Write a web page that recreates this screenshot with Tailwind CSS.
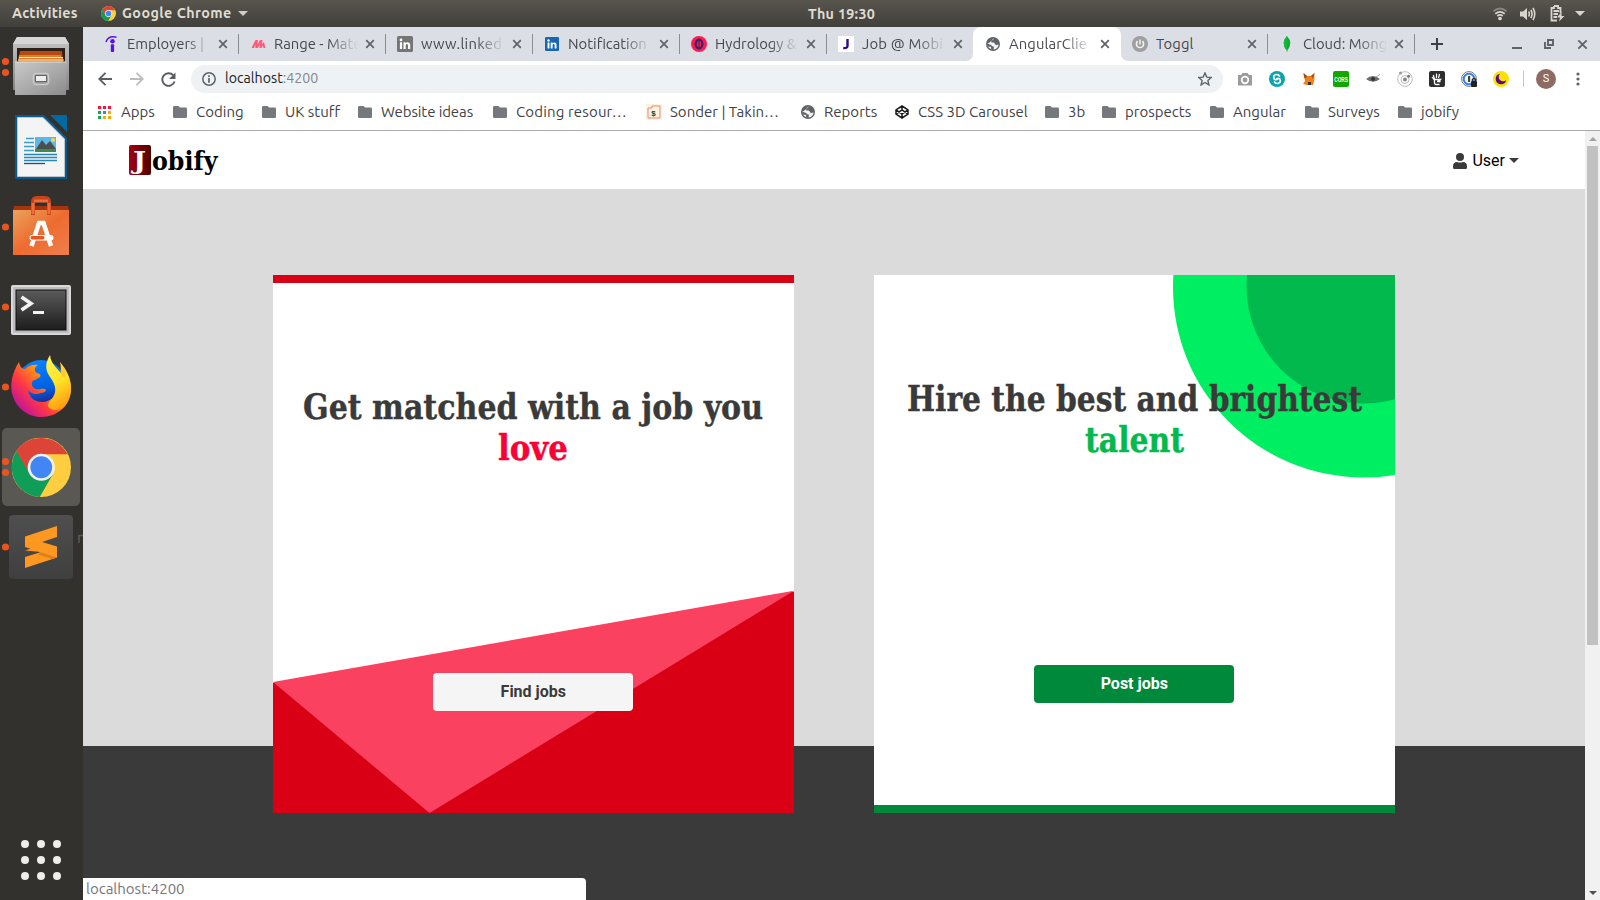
<!DOCTYPE html>
<html lang="en">
<head>
<meta charset="utf-8">
<title>Jobify</title>
<script src="https://cdn.jsdelivr.net/npm/@tailwindcss/browser@4"></script>
</head>
<body class="w-[1600px] h-[900px] overflow-hidden bg-[#33312d] font-['Ubuntu','Open_Sans',sans-serif]">
<svg class="absolute size-0">
  <defs>
    <linearGradient id="metal" x1="0" y1="0" x2="0" y2="1"><stop offset="0" stop-color="#c6c6c6"/><stop offset="1" stop-color="#858585"/></linearGradient>
    <linearGradient id="front" x1="0" y1="0" x2="1" y2="1"><stop offset="0" stop-color="#c9c9c9"/><stop offset=".6" stop-color="#a5a5a5"/><stop offset="1" stop-color="#8a8a8a"/></linearGradient>
    <linearGradient id="bag" x1="0" y1="0" x2="1" y2="1"><stop offset="0" stop-color="#e9a35c"/><stop offset=".5" stop-color="#ee6b30"/><stop offset="1" stop-color="#ef7f4c"/></linearGradient>
    <linearGradient id="term" x1="0" y1="0" x2="0" y2="1"><stop offset="0" stop-color="#5b5b5b"/><stop offset="1" stop-color="#1d1d1d"/></linearGradient>
    <linearGradient id="ffbody" x1=".9" y1=".1" x2=".1" y2=".8"><stop offset="0" stop-color="#ffd93b"/><stop offset=".35" stop-color="#ff980e"/><stop offset=".7" stop-color="#ff3647"/><stop offset="1" stop-color="#c3149b"/></linearGradient>
    <linearGradient id="fftail" x1=".3" y1="0" x2=".6" y2="1"><stop offset="0" stop-color="#fff44f"/><stop offset=".5" stop-color="#ffe226"/><stop offset="1" stop-color="#ff980e"/></linearGradient>
    <linearGradient id="ffglobe" x1=".3" y1="0" x2=".5" y2="1"><stop offset="0" stop-color="#0a84ff"/><stop offset=".6" stop-color="#0060df"/><stop offset="1" stop-color="#2b1173"/></linearGradient>
    <linearGradient id="subl" x1="0" y1="0" x2="0" y2="1"><stop offset="0" stop-color="#4f4f4f"/><stop offset="1" stop-color="#3f3f3f"/></linearGradient>
    <symbol id="chrome" viewBox="0 0 60 60">
      <circle cx="30" cy="30" r="30" fill="#ffcd40"/>
      <path d="M5.500 13A30 30 0 0 0 28.500 60L42 36.500L30 43L18.700 36.500Z" fill="#0f9d58"/>
      <path d="M30 17H57L56 16A30 30 0 0 0 4.800 13.700L18.700 37Z" fill="#db4437"/>
      <circle cx="30" cy="30" r="13.700" fill="#f1f1f1"/><circle cx="30" cy="30" r="11" fill="#4285f4"/>
    </symbol>
    <symbol id="x" viewBox="0 0 10 10"><path d="M1.200 1.200L8.800 8.800M8.800 1.200L1.200 8.800" stroke="#5f6368" stroke-width="1.700"/></symbol>
    <symbol id="folder" viewBox="0 0 14 12"><path d="M1.300 0H5.500L7 1.600H12.700A1.300 1.300 0 0 1 14 2.900V10.700A1.300 1.300 0 0 1 12.700 12H1.300A1.300 1.300 0 0 1 0 10.700V1.300A1.300 1.300 0 0 1 1.300 0Z" fill="#75797d"/></symbol>
    <symbol id="globe" viewBox="0 0 14 14"><circle cx="7" cy="7" r="7" fill="#5f6368"/><path d="M8.300 1.500C6 2 5.800 2.800 6.500 3.600C5 4 4.800 5 5.500 5.600C7 5.200 8.600 5.300 8.800 6.800C9 8.300 10.500 7.900 12.600 7.600C12.400 10.200 10.500 12.400 7.600 12.600C7 11.700 8.600 11 7.700 9.600C6.500 9.400 6 9 5.400 8.200C4.300 7.900 3 7 1.500 6.800C1.300 8 1.600 8.800 2 9.700L5 9.800L5.100 11.800L6 12.500L4 11.500C2.500 10.500 1.500 9 1.500 7" fill="#fff" opacity=".93"/></symbol>
    <symbol id="in" viewBox="0 0 16 16"><rect width="16" height="16" rx="1.500" fill="currentColor"/><circle cx="4" cy="3.900" r="1.400" fill="#fff"/><path d="M2.900 6.300H5.100V13H2.900ZM6.500 6.300H8.600V7.200C9.900 5.500 13.200 5.700 13.200 9V13H11V9.500C11 7.500 8.700 7.500 8.700 9.500V13H6.500Z" fill="#fff"/></symbol>
  </defs>
</svg>

<!-- GNOME top bar -->
<header class="relative flex h-[27px] items-center bg-linear-to-b from-[#58554d] to-[#403f3a] text-[14.3px] font-bold text-[#dfdbd2]">
  <div class="w-[89px] pl-3 leading-[27px] tracking-[.2px]">Activities</div>
  <svg class="ml-3 size-[15px]"><use href="#chrome"/></svg>
  <div class="ml-1.5 w-[112px] whitespace-nowrap leading-[27px] tracking-[.45px]">Google Chrome</div>
  <svg class="ml-1 h-[5px] w-[10px]"><path d="M0 0H10L5 5Z" fill="#d0cdc5"/></svg>
  <div class="absolute left-[808px] leading-[26px] tracking-[.3px]">Thu 19:30</div>
  <div class="ml-auto flex items-center pr-[15px]">
    <svg class="h-[14px] w-[14px]" viewBox="0 0 14 14" fill="none" stroke="#d8d5cd" stroke-width="1.700"><path d="M.5 4.300Q7-1.300 13.500 4.300" stroke="#85837c"/><path d="M2.300 6.800Q7 2.800 11.700 6.800M4.300 9Q7 6.800 9.700 9"/><circle cx="7" cy="11.500" r="1.200" fill="#d8d5cd" stroke-width="1.300"/></svg>
    <svg class="ml-[13px] h-[14px] w-[16px]" viewBox="0 0 16 14"><path d="M0 4.500H3L7 1V13L3 9.500H0Z" fill="#d8d5cd"/><path d="M8.500 4.500Q10.300 7 8.500 9.500M10.800 2.800Q13.300 7 10.800 11.200M13 1Q16.500 7 13 13" fill="none" stroke="#d8d5cd" stroke-width="1.600"/></svg>
    <svg class="ml-[14px] h-[17px] w-[15px]" viewBox="0 0 15 17"><path d="M4 1H8V3H10.500V8M7 15.500H1.500V3H4V1M3.500 6H9M3.500 9H8M3.500 12H7" fill="none" stroke="#d8d5cd" stroke-width="1.800"/><path d="M11.500 7L7 12.500H10L9 16.500L14.500 11H11.500Z" fill="#d8d5cd"/></svg>
    <svg class="ml-[10px] h-[5px] w-[10px]"><path d="M0 0H10L5 5Z" fill="#d8d5cd"/></svg>
  </div>
</header>

<div class="flex h-[873px]">
  <!-- Dock -->
  <aside class="flex w-[83px] shrink-0 flex-col bg-[#33312d]">
    <svg class="h-20 w-[83px]" viewBox="0 0 83 80">
      <circle cx="5.500" cy="34.500" r="3.600" fill="#e95420"/><circle cx="5.500" cy="45.500" r="3.600" fill="#e95420"/>
      <path d="M17 10H65L69 17V63H13V17Z" fill="url(#metal)"/><path d="M17 10H65L69 17H13Z" fill="#d6d6d6"/>
      <rect x="17" y="21" width="48" height="16" fill="#2c2018"/><path d="M20 24H62L63 36H18Z" fill="#b8480d"/><path d="M19 28H61V31H63V36H18Z" fill="#d9822b"/><path d="M19 30.500H63M18 33H64" stroke="#fbe3b5" stroke-width="1.200"/>
      <path d="M15 35H67L66 68H15Z" fill="url(#front)"/><path d="M15 35H66" stroke="#ddd"/>
      <rect x="33.500" y="46.500" width="15" height="11" rx="3" fill="#999" stroke="#ccc" stroke-width="1.500"/><rect x="35.500" y="48.500" width="11" height="6" fill="#eee" stroke="#666"/>
    </svg>
    <svg class="h-20 w-[83px]" viewBox="0 0 83 80">
      <path d="M15 8H44L67 31V72H15Z" fill="#075b93"/><path d="M17.500 10.500H43L64.500 32V69.500H17.500Z" fill="#f4f4f4" stroke="#c5c5c5"/>
      <path d="M50 8H66L67 9V25Z" fill="#0369a3"/>
      <path d="M26 31.500H34M24 35.500H34M24 39.500H34M24 43.500H34" stroke="#3c9ccb" stroke-width="1.500"/><path d="M24 47.500H57M24 50.500H57M24 53.500H57" stroke="#2787ba" stroke-width="1.600"/><path d="M24 56.500H45" stroke="#0c5585" stroke-width="1.300"/>
      <rect x="35" y="30" width="21" height="15" fill="#5cb8e6"/><path d="M36 42L42 33L46 38L50 34L56 42V44H36Z" fill="#4c4f4f"/><path d="M35 42H56V45H35Z" fill="#3e8c4b"/><circle cx="53" cy="33" r="2" fill="#f7d64a"/>
    </svg>
    <svg class="h-20 w-[83px]" viewBox="0 0 83 80">
      <circle cx="5.500" cy="40" r="3.600" fill="#e95420"/>
      <path d="M14 19H68L69 24H13Z" fill="#a63410"/><path d="M13 23H69V68H13Z" fill="url(#bag)"/>
      <path d="M33 28V15Q33 11 37 11H45Q49 11 49 15V28" fill="none" stroke="#c9431a" stroke-width="4"/><path d="M33 27V16M49 27V16M34 14H48" stroke="#ee6d3a" stroke-width="3"/>
      <path d="M31.500 59L39 36H43.500L51 59" fill="none" stroke="#fff" stroke-width="4.500"/><rect x="29.500" y="48" width="24" height="5.500" rx="2.700" fill="#fff"/><rect x="30.500" y="49" width="14" height="3.500" rx="1.700" fill="#e95420"/>
    </svg>
    <svg class="h-20 w-[83px]" viewBox="0 0 83 80">
      <circle cx="5.500" cy="40" r="3.600" fill="#e95420"/>
      <rect x="11" y="18" width="60" height="50" rx="2" fill="#d9d9d9"/><rect x="13" y="20" width="56" height="46" fill="#bdbdbd"/><rect x="16" y="23" width="50" height="40" fill="url(#term)" stroke="#111"/>
      <path d="M21.500 30L31 36.500L21.500 43" fill="none" stroke="#f2f2f2" stroke-width="3.600"/><path d="M33 45.500H44" stroke="#f2f2f2" stroke-width="3"/>
    </svg>
    <svg class="h-20 w-[83px]" viewBox="0 0 83 80">
      <circle cx="5.500" cy="40" r="3.600" fill="#e95420"/>
      <circle cx="41" cy="38" r="25" fill="url(#ffglobe)"/>
      <path d="M19 15C12 26 10 37 12 46C15 60 27 70 41 70C58 70 71 58 71 42C71 30 66 22 60 15C62 24 60 30 57 36C60 47 51 55 42 55C34 55 29 50 28 43C31 47 36 48 41 46C45 46 47 43 45 42C40 41 38 44 34 41C30 38 32 33 35 33L40 30Q42 27 37 26C33 23 35 20 38 18C32 17 28 19 25 22C21 22 20 19 19 15Z" fill="url(#ffbody)"/>
      <path d="M50 8C44 18 46 24 50 30C56 38 58 46 50 54C43 62 57 66 64 60C74 48 72 33 66 26C66 29 65 31 63 30C60 22 51 19 50 8Z" fill="url(#fftail)"/>
    </svg>
    <svg class="h-20 w-[83px]" viewBox="0 0 83 80">
      <rect x="2" y="1" width="78" height="78" rx="5" fill="#5a5853"/>
      <circle cx="5.500" cy="34.500" r="3.600" fill="#e95420"/><circle cx="5.500" cy="45.500" r="3.600" fill="#e95420"/>
      <svg x="11.500" y="10.500" width="59.500" height="59.500"><use href="#chrome"/></svg>
    </svg>
    <svg class="h-20 w-[83px]" viewBox="0 0 83 80">
      <circle cx="5.500" cy="40" r="3.600" fill="#e95420"/>
      <rect x="9" y="8" width="64" height="64" rx="4" fill="url(#subl)"/>
      <path d="M25 43.500L36 40L57 46V50.500L25 61V50L41 45Z" fill="#ff9820"/><path d="M25 29.500L57 19V30L42 35L57 39.500V50.500L25 40Z" fill="#ff9820"/><path d="M31 42L57 50.500L52 52L38 47.500L42 45.500Z" fill="#d87b12" opacity=".8"/>
      <path d="M79 36V28.500H83" fill="none" stroke="#5c5a56" stroke-width="1.500"/>
    </svg>
    <div class="mt-[253px] ml-[21px] grid w-10 grid-cols-3 gap-2">
      <i class="size-2 rounded-full bg-[#eeeeec]"></i><i class="size-2 rounded-full bg-[#eeeeec]"></i><i class="size-2 rounded-full bg-[#eeeeec]"></i>
      <i class="size-2 rounded-full bg-[#eeeeec]"></i><i class="size-2 rounded-full bg-[#eeeeec]"></i><i class="size-2 rounded-full bg-[#eeeeec]"></i>
      <i class="size-2 rounded-full bg-[#eeeeec]"></i><i class="size-2 rounded-full bg-[#eeeeec]"></i><i class="size-2 rounded-full bg-[#eeeeec]"></i>
    </div>
  </aside>

  <!-- Browser window -->
  <main class="flex w-[1517px] flex-col bg-white">
    <!-- Tabs -->
    <div class="flex h-[34px] items-center bg-[#dcdee6] pl-[9px] text-[14.8px] text-[#45484c]">
      <div class="flex h-5 w-[147px] items-center border-r border-[#8b8d92] pl-3">
        <svg class="size-4 shrink-0" viewBox="0 0 16 16"><circle cx="8.500" cy="5.300" r="2.300" fill="#5a0ff0"/><rect x="6.800" y="8.300" width="3.300" height="7.700" rx="1" fill="#5a0ff0"/><path d="M2 6Q4-.5 12.500 1.200" fill="none" stroke="#5a0ff0" stroke-width="1.500"/></svg>
        <span class="ml-[7px] w-[84px] overflow-hidden whitespace-nowrap mask-r-from-70% mask-r-to-100%">Employers |</span>
        <svg class="ml-[7px] size-[10px]"><use href="#x"/></svg>
      </div>
      <div class="flex h-5 w-[147px] items-center border-r border-[#8b8d92] pl-3">
        <svg class="size-4 shrink-0" viewBox="0 0 16 16"><path d="M.5 12L4.500 4H7L6.500 8.500L9 4H11.500L11 8L13 6L14.500 12H12.500L11.800 9.500L10.500 12H8.500L8.800 8.500L6.800 12H4.300L4.700 8.500L3 12Z" fill="#ff5b79"/></svg>
        <span class="ml-[7px] w-[84px] overflow-hidden whitespace-nowrap mask-r-from-65% mask-r-to-100%">Range - Mate</span>
        <svg class="ml-[7px] size-[10px]"><use href="#x"/></svg>
      </div>
      <div class="flex h-5 w-[147px] items-center border-r border-[#8b8d92] pl-[11px]">
        <svg class="size-4 shrink-0 text-[#757575]"><use href="#in"/></svg>
        <span class="ml-2 w-[84px] overflow-hidden whitespace-nowrap tracking-[.3px] mask-r-from-65% mask-r-to-100%">www.linked</span>
        <svg class="ml-[7px] size-[10px]"><use href="#x"/></svg>
      </div>
      <div class="flex h-5 w-[147px] items-center border-r border-[#8b8d92] pl-3">
        <svg class="size-[14px] shrink-0 text-[#1666b8]"><use href="#in"/></svg>
        <span class="ml-[9px] w-[84px] overflow-hidden whitespace-nowrap mask-r-from-65% mask-r-to-100%">Notification</span>
        <svg class="ml-[7px] size-[10px]"><use href="#x"/></svg>
      </div>
      <div class="flex h-5 w-[147px] items-center border-r border-[#8b8d92] pl-[11px]">
        <svg class="size-4 shrink-0" viewBox="0 0 16 16"><circle cx="8" cy="8" r="8" fill="#fb1c53"/><ellipse cx="8" cy="8" rx="3.400" ry="4.300" fill="none" stroke="#3b2363" stroke-width="2.200"/><path d="M8 4V12" stroke="#3b2363"/></svg>
        <span class="ml-2 w-[84px] overflow-hidden whitespace-nowrap mask-r-from-65% mask-r-to-100%">Hydrology &amp;</span>
        <svg class="ml-[7px] size-[10px]"><use href="#x"/></svg>
      </div>
      <div class="flex h-5 w-[146px] items-center pl-[11px]">
        <svg class="size-4 shrink-0" viewBox="0 0 16 16"><rect width="16" height="16" fill="#fff"/><path d="M9.500 3V10Q9.300 12.500 5.300 12" fill="none" stroke="#2d0a83" stroke-width="2.400"/></svg>
        <span class="ml-2 w-[84px] overflow-hidden whitespace-nowrap tracking-[.2px] mask-r-from-65% mask-r-to-100%">Job @ Mobi</span>
        <svg class="ml-[7px] size-[10px]"><use href="#x"/></svg>
      </div>
      <div class="relative flex h-[34px] w-[148px] items-center rounded-t-lg bg-white pl-[13px]">
        <svg class="absolute -left-2 bottom-0 size-2"><path d="M8 0V8H0Q8 8 8 0" fill="#fff"/></svg>
        <svg class="absolute -right-2 bottom-0 size-2"><path d="M0 0V8H8Q0 8 0 0" fill="#fff"/></svg>
        <svg class="size-[14px] shrink-0"><use href="#globe"/></svg>
        <span class="ml-[9px] w-[84px] overflow-hidden whitespace-nowrap tracking-[.1px] mask-r-from-65% mask-r-to-100%">AngularClie</span>
        <svg class="ml-[7px] size-[10px]"><use href="#x"/></svg>
      </div>
      <div class="flex h-5 w-[147px] items-center border-r border-[#8b8d92] pl-[11px]">
        <svg class="size-4 shrink-0" viewBox="0 0 16 16"><circle cx="8" cy="8" r="8" fill="#9f9f9f"/><path d="M8 3.500V8.500M5.500 5Q3.300 8 5.300 10.500Q8 12.700 10.700 10.500Q12.700 8 10.500 5" fill="none" stroke="#f2f2f2" stroke-width="1.500"/></svg>
        <span class="ml-2 w-[84px] tracking-[.1px]">Toggl</span>
        <svg class="ml-[7px] size-[10px]"><use href="#x"/></svg>
      </div>
      <div class="flex h-5 w-[147px] items-center border-r border-[#8b8d92] pl-[11px]">
        <svg class="size-4 shrink-0" viewBox="0 0 16 16"><path d="M8 0Q14.500 7 8.300 14.500V16H7.700V14.500Q1.500 7 8 0Z" fill="#13aa36"/><path d="M8 0Q1.500 7 7.800 14.500Z" fill="#10bb35"/></svg>
        <span class="ml-2 w-[84px] overflow-hidden whitespace-nowrap mask-r-from-65% mask-r-to-100%">Cloud: Mong</span>
        <svg class="ml-[7px] size-[10px]"><use href="#x"/></svg>
      </div>
      <svg class="ml-4 size-3" viewBox="0 0 12 12"><path d="M6 0V12M0 6H12" stroke="#3c4043" stroke-width="2"/></svg>
      <svg class="ml-[69px] h-[10px] w-[10px]"><path d="M0 9H10" stroke="#5f6368" stroke-width="2"/></svg>
      <svg class="ml-[22px] size-[10px]" viewBox="0 0 10 10"><path d="M4 1H9V6H4ZM1 3V9H7" fill="none" stroke="#5f6368" stroke-width="1.900"/></svg>
      <svg class="ml-[23px] size-[11px]"><use href="#x"/></svg>
    </div>

    <!-- Toolbar -->
    <div class="flex h-9 items-center pl-[15px]">
      <svg class="size-[14px]" viewBox="0 0 14 14"><path d="M14 7H1.500M7.500.8L1.300 7L7.500 13.200" fill="none" stroke="#5a5e63" stroke-width="1.900"/></svg>
      <svg class="ml-[18px] size-[14px]" viewBox="0 0 14 14"><path d="M0 7H12.500M6.500.8L12.700 7L6.500 13.200" fill="none" stroke="#bcbdbf" stroke-width="1.900"/></svg>
      <svg class="ml-[17px] size-[15px]" viewBox="0 0 15 15"><path d="M12.300 3.300A6.300 6.300 0 1 0 13.600 9.500" fill="none" stroke="#5a5e63" stroke-width="1.900"/><path d="M14.500.5V7H8Z" fill="#5a5e63"/></svg>
      <div class="ml-[15px] flex h-7 w-[1032px] items-center rounded-full bg-[#eff2f4] pl-[11px] pr-[11px] text-[14.2px]">
        <svg class="size-[14px]" viewBox="0 0 14 14"><circle cx="7" cy="7" r="6.200" fill="none" stroke="#5f6368" stroke-width="1.500"/><path d="M7 6V10.800M7 3.200V4.900" stroke="#5f6368" stroke-width="1.700"/></svg>
        <span class="ml-[9px] text-[#202124]">localhost<span class="text-[#80868b]">:4200</span></span>
        <svg class="ml-auto size-[14px]" viewBox="0 0 14 14"><path d="M7 1L8.800 5.100L13.300 5.500L9.900 8.500L10.900 12.900L7 10.500L3.100 12.900L4.100 8.500L.7 5.500L5.200 5.100Z" fill="none" stroke="#5f6368" stroke-width="1.400"/></svg>
      </div>
      <div class="ml-[14px] flex items-center gap-4">
        <svg class="size-4" viewBox="0 0 16 16"><path d="M1 4H4L5.500 2H10.500L12 4H15V14.500H1Z" fill="#9b9b9b"/><circle cx="8" cy="9" r="3.300" fill="#9b9b9b" stroke="#fff" stroke-width="1.700"/></svg>
        <svg class="size-4" viewBox="0 0 16 16"><circle cx="8" cy="8" r="8" fill="#0ca3b0"/><path d="M11 5.500C9 2.500 4.500 3 4.700 6.500C5 9.500 8 9 9 7.500M5 10.500C7 13.500 11.500 13 11.300 9.500C11 6.500 8 7 7 8.500" fill="none" stroke="#fff" stroke-width="1.600"/></svg>
        <svg class="size-4" viewBox="0 0 16 16"><path d="M2.500 2L6 5H10L13.500 2L13.300 9L12 14H6L2 13L4 10Z" fill="#f08119"/><path d="M2.500 2L6 5L4.500 8L3 6ZM13.500 2L10 5L12 7.500Z" fill="#a5491b"/><path d="M7 11H10V14H7Z" fill="#333"/></svg>
        <svg class="size-4" viewBox="0 0 16 16"><rect width="16" height="16" rx="2" fill="#12a800"/><text x="1.300" y="11" font-size="7.500" font-weight="bold" fill="#fff" textLength="13.500" lengthAdjust="spacingAndGlyphs" font-family="Liberation Sans">CORS</text></svg>
        <svg class="size-4" viewBox="0 0 16 16"><path d="M1 8Q8 2 15 8Q8 13.500 1 8Z" fill="#6e6e6e"/><circle cx="8" cy="8" r="2" fill="#333"/><path d="M11 6L15 3.500" stroke="#aaa"/></svg>
        <svg class="size-4" viewBox="0 0 16 16" fill="none" stroke="#bcbcbc"><circle cx="8" cy="8" r="7.300"/><circle cx="8" cy="8.500" r="4"/><circle cx="8" cy="8.500" r="2" fill="#888" stroke="none"/><circle cx="11.500" cy="5.300" r="1.500" fill="#777" stroke="none"/><circle cx="3.500" cy="2" r="1.500" fill="#999" stroke="none"/></svg>
        <svg class="size-4" viewBox="0 0 16 16"><rect width="16" height="16" rx="2" fill="#2e2e2e"/><path d="M5.500 8L4.300 4M7.500 7V2.500M9.500 7L10.500 3M3 6L5 8.500" stroke="#fff" stroke-width="1.200"/><path d="M4.500 8.500H11.500Q10 10.500 8 10.500M5.500 9Q5 13.500 7 13.500H10.500M8 10.500H11.500" fill="none" stroke="#fff" stroke-width="1.300"/></svg>
        <svg class="size-4" viewBox="0 0 16 16"><circle cx="8" cy="8" r="7.400" fill="#fff" stroke="#777"/><circle cx="8" cy="8" r="5.300" fill="#fff" stroke="#3b80f0" stroke-width="2"/><rect x="7" y="5" width="2.200" height="6" fill="#444"/><rect x="10" y="10" width="6" height="6" rx="1" fill="#222"/><path d="M11.300 10V8.500Q13 6.500 14.700 8.500V10" fill="none" stroke="#222" stroke-width="1.200"/></svg>
        <svg class="size-4" viewBox="0 0 16 16"><circle cx="8" cy="8" r="8" fill="#fbe200"/><path d="M7 2.800A5.300 5.300 0 1 0 13.200 9A4 4 0 0 1 7 2.800Z" fill="#5a0b84"/></svg>
      </div>
      <div class="ml-[14px] h-4 w-px bg-[#c4c6c9]"></div>
      <div class="ml-3 flex size-5 items-center justify-center rounded-full bg-[#8d6a62] font-['Roboto',sans-serif] text-[11px] text-white">S</div>
      <svg class="ml-5 h-[14px] w-1" viewBox="0 0 4 14" fill="#5f6368"><circle cx="2" cy="2" r="1.600"/><circle cx="2" cy="7" r="1.600"/><circle cx="2" cy="12" r="1.600"/></svg>
    </div>

    <!-- Bookmarks -->
    <div class="flex h-[34px] items-center border-b border-[#ababab] pb-[3px] pl-[15px] text-[15px] whitespace-nowrap text-[#3f4246]">
      <div class="flex w-[75px] items-center gap-[10px]"><svg class="size-[13px]" viewBox="0 0 13 13"><path d="M0 0h3v3H0zM5 0h3v3H5zM10 0h3v3h-3z" fill="#f5153a"/><path d="M0 5h3v3H0z" fill="#1aa260"/><path d="M5 5h3v3H5z" fill="#4285f4"/><path d="M10 5h3v3h-3zM5 10h3v3H5zM10 10h3v3h-3z" fill="#f9ab00"/><path d="M0 10h3v3H0z" fill="#1aa260"/></svg>Apps</div>
      <div class="flex w-[89px] items-center gap-[9px]"><svg class="h-3 w-[14px]"><use href="#folder"/></svg>Coding</div>
      <div class="flex w-24 items-center gap-[9px]"><svg class="h-3 w-[14px]"><use href="#folder"/></svg>UK stuff</div>
      <div class="flex w-[135px] items-center gap-[9px]"><svg class="h-3 w-[14px]"><use href="#folder"/></svg><span class="tracking-[-.1px]">Website ideas</span></div>
      <div class="flex w-[153px] items-center gap-[9px]"><svg class="h-3 w-[14px]"><use href="#folder"/></svg><span class="tracking-[.15px]">Coding resour…</span></div>
      <div class="flex w-[155px] items-center gap-2"><svg class="size-4" viewBox="0 0 16 16"><rect width="16" height="16" fill="#faf3df"/><path d="M2 14V4H6V2H14V14Z" fill="none" stroke="#ea8777"/><text x="5.300" y="11.800" font-size="8" font-weight="bold" fill="#333" font-family="Liberation Sans">$</text></svg>Sonder | Takin…</div>
      <div class="flex w-[94px] items-center gap-[9px]"><svg class="size-[14px]"><use href="#globe"/></svg>Reports</div>
      <div class="flex w-[150px] items-center gap-[9px]"><svg class="size-[14px]" viewBox="0 0 14 14" fill="none" stroke="#1a1a1a" stroke-width="1.500"><path d="M7 1L13 4.800V9.200L7 13L1 9.200V4.800ZM1 4.800L7 9L13 4.800M1 9.200L7 5L13 9.200M7 1V5M7 9V13"/></svg>CSS 3D Carousel</div>
      <div class="flex w-[57px] items-center gap-[9px]"><svg class="h-3 w-[14px]"><use href="#folder"/></svg>3b</div>
      <div class="flex w-[108px] items-center gap-[9px]"><svg class="h-3 w-[14px]"><use href="#folder"/></svg>prospects</div>
      <div class="flex w-[95px] items-center gap-[9px]"><svg class="h-3 w-[14px]"><use href="#folder"/></svg>Angular</div>
      <div class="flex w-[93px] items-center gap-[9px]"><svg class="h-3 w-[14px]"><use href="#folder"/></svg>Surveys</div>
      <div class="flex items-center gap-[9px]"><svg class="h-3 w-[14px]"><use href="#folder"/></svg>jobify</div>
    </div>

    <!-- Page -->
    <div class="relative flex h-[769px]">
      <div class="flex w-[1502px] flex-col font-['Roboto',sans-serif]">
        <nav class="flex h-[58px] shrink-0 items-center justify-between bg-white pl-[46px] pr-[66px]">
          <div class="flex items-center">
            <div class="flex h-[30px] w-[22px] items-center justify-center rounded-xs bg-linear-to-r from-[#a30014] to-[#520000]">
              <svg class="h-[30px] w-[22px] overflow-visible"><text x="4" y="24" font-family="'Roboto Slab','DejaVu Serif Condensed',serif" font-size="25" font-weight="bold" fill="#fff" textLength="13" lengthAdjust="spacingAndGlyphs">J</text></svg>
            </div>
            <svg class="h-[30px] w-[70px] overflow-visible"><text x="1" y="24.500" font-family="'Roboto Slab','DejaVu Serif Condensed',serif" font-size="26" font-weight="bold" fill="#000" textLength="65.500" lengthAdjust="spacingAndGlyphs">obify</text></svg>
          </div>
          <div class="flex items-center pt-px text-base text-black">
            <svg class="h-4 w-[14px]" viewBox="0 0 14 16" fill="#3a3a3a"><circle cx="7" cy="4" r="4"/><path d="M0 13.500Q0 9 4 9Q7 10.200 10 9Q14 9 14 13.500V14.500Q14 16 12.500 16H1.500Q0 16 0 14.500Z"/></svg>
            <span class="ml-[5px]">User</span>
            <svg class="ml-1 h-[5px] w-[10px]"><path d="M0 0H10L5 5Z" fill="#3a3a3a"/></svg>
          </div>
        </nav>
        <section class="flex h-[711px] items-start gap-20 bg-linear-to-b from-[#dbdbdb] from-[557px] to-[#3a3a3a] to-[557px] pt-[86px] pl-[190.300px]">
          <!-- Job seekers -->
          <div class="relative flex h-[538px] w-[521px] flex-col items-center border-t-8 border-[#d90016] bg-white">
            <svg class="absolute inset-x-0 bottom-0 h-[223px] w-[521px]"><path d="M0 93L521 1.500V223H0Z" fill="#d90016"/><path d="M0 92L521 .7L156.500 223Z" fill="#fb4160"/></svg>
            <svg class="relative mt-[99px] h-[96px] w-[521px]" font-family="'Roboto Slab','DejaVu Serif Condensed',serif" font-size="36" font-weight="bold" stroke-width=".4">
              <text x="30" y="37" fill="#3a3a3a" stroke="#3a3a3a" textLength="460" lengthAdjust="spacingAndGlyphs">Get matched with a job you</text>
              <text x="225" y="78" fill="#fa0035" stroke="#fa0035" textLength="70" lengthAdjust="spacingAndGlyphs">love</text>
            </svg>
            <div class="relative mt-[195px] mr-px h-[38px] w-[200px] rounded bg-[#f5f5f5] text-center text-base leading-[37px] font-bold text-[#3a3a3a]">Find jobs</div>
          </div>
          <!-- Employers -->
          <div class="relative flex h-[538px] w-[521px] flex-col items-center border-b-8 border-[#00893b] bg-white">
            <svg class="absolute inset-x-0 top-0 h-[203px] w-[521px]"><circle cx="489.500" cy="12" r="190.500" fill="#00ee62"/><circle cx="489.500" cy="11.500" r="117" fill="#02b94e"/></svg>
            <svg class="relative mt-[99px] h-[96px] w-[521px]" font-family="'Roboto Slab','DejaVu Serif Condensed',serif" font-size="36" font-weight="bold" stroke-width=".4">
              <text x="33" y="37" fill="#3a3a3a" stroke="#3a3a3a" textLength="455" lengthAdjust="spacingAndGlyphs">Hire the best and brightest</text>
              <text x="211" y="78" fill="#02b94e" stroke="#02b94e" textLength="99" lengthAdjust="spacingAndGlyphs">talent</text>
            </svg>
            <div class="relative mt-[195px] mr-px h-[38px] w-[200px] rounded bg-[#00893b] text-center text-base leading-[37px] font-bold text-white">Post jobs</div>
          </div>
        </section>
      </div>
      <!-- Scrollbar -->
      <div class="flex w-[15px] flex-col items-center bg-[#f1f1f1] pt-1.5">
        <svg class="h-[4px] w-2"><path d="M0 4H8L4 0Z" fill="#a3a3a3"/></svg>
        <div class="mt-[5px] h-[499px] w-[11px] bg-[#c1c1c1]"></div>
        <svg class="mt-auto mb-[5px] h-[4px] w-2"><path d="M0 0H8L4 4Z" fill="#505050"/></svg>
      </div>
      <div class="absolute bottom-0 left-0 h-[22px] w-[503px] rounded-tr bg-white pl-[3px] text-[15px] leading-[22px] text-[#74777b]">localhost:4200</div>
    </div>
  </main>
</div>
</body>
</html>
